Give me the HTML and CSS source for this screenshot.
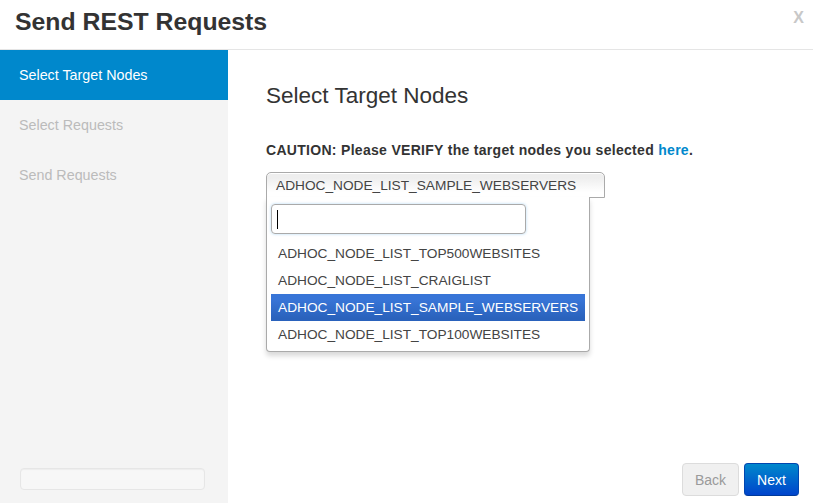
FILE: index.html
```html
<!DOCTYPE html>
<html>
<head>
<meta charset="utf-8">
<link rel="stylesheet" href="styles.css">
</head>
<body>
<div class="modal">
  <div class="modal-header">
    <h3 class="title">Send REST Requests</h3>
    <span class="close">X</span>
  </div>
  <div class="modal-body">
    <aside class="sidebar">
      <ul class="steps">
        <li class="step active">Select Target Nodes</li>
        <li class="step">Select Requests</li>
        <li class="step">Send Requests</li>
      </ul>
      <div class="side-well"></div>
    </aside>
    <main class="content">
      <div class="pane">
        <h2 class="pane-title">Select Target Nodes</h2>
        <p class="caution">CAUTION: Please VERIFY the target nodes you selected <a class="link">here</a>.</p>
        <div class="chosen">
          <div class="chosen-single">ADHOC_NODE_LIST_SAMPLE_WEBSERVERS</div>
          <div class="chosen-drop">
            <div class="chosen-search"><div class="search-box"><span class="caret"></span></div></div>
            <ul class="results">
              <li class="result">ADHOC_NODE_LIST_TOP500WEBSITES</li>
              <li class="result">ADHOC_NODE_LIST_CRAIGLIST</li>
              <li class="result highlighted">ADHOC_NODE_LIST_SAMPLE_WEBSERVERS</li>
              <li class="result">ADHOC_NODE_LIST_TOP100WEBSITES</li>
            </ul>
          </div>
        </div>
      </div>
      <div class="footer">
        <button class="btn btn-back">Back</button>
        <button class="btn btn-next">Next</button>
      </div>
    </main>
  </div>
</div>
</body>
</html>
```

FILE: styles.css
```css
* { box-sizing: border-box; }
html, body {
  margin: 0;
  padding: 0;
  background: #fff;
  font-family: "Liberation Sans", Arial, sans-serif;
  color: #333;
}
.modal {
  width: 813px;
  height: 503px;
  display: flex;
  flex-direction: column;
  overflow: hidden;
}
.modal-header {
  height: 50px;
  border-bottom: 1px solid #e5e5e5;
  display: flex;
  justify-content: space-between;
  align-items: flex-start;
  padding: 7px 9px 0 15px;
}
.title {
  margin: 0;
  font-size: 24.8px;
  line-height: 30px;
  font-weight: bold;
  color: #333;
}
.close {
  margin-top: 2px;
  font-size: 16px;
  line-height: 18px;
  font-weight: bold;
  color: #c8c8c8;
}
.modal-body {
  flex: 1;
  display: flex;
  min-height: 0;
}
.sidebar {
  width: 228px;
  background: #f4f4f4;
  display: flex;
  flex-direction: column;
}
.steps {
  list-style: none;
  margin: 0;
  padding: 0;
}
.step {
  height: 50px;
  line-height: 51px;
  padding-left: 19px;
  font-size: 14.3px;
  color: #bbb;
}
.step.active {
  background: #0088cc;
  color: #fff;
}
.side-well {
  margin: auto 23px 13px 20px;
  height: 22px;
  background: #f7f7f7;
  border: 1px solid #e6e6e6;
  border-radius: 4px;
  box-shadow: inset 0 1px 1px rgba(0,0,0,0.04);
}
.content {
  flex: 1;
  display: flex;
  flex-direction: column;
}
.pane {
  flex: 1;
  padding: 33px 0 0 38px;
}
.pane-title {
  margin: 0;
  font-size: 22.5px;
  line-height: 26px;
  font-weight: normal;
  color: #333;
}
.caution {
  margin: 32px 0 0;
  font-size: 14px;
  letter-spacing: 0.3px;
  line-height: 18px;
  font-weight: bold;
  color: #333;
}
.link {
  color: #0088cc;
}
.chosen {
  position: relative;
  margin-top: 13px;
  width: 339px;
  font-size: 13.7px;
}
.chosen-single {
  height: 26px;
  line-height: 25px;
  padding-left: 9px;
  border: 1px solid #aaa;
  border-radius: 5px 5px 0 0;
  background: linear-gradient(#eee 20%, #fff 80%);
  box-shadow: inset 0 1px 0 #fff;
  color: #444;
  white-space: nowrap;
}
.chosen-drop {
  position: absolute;
  top: 100%;
  margin-top: -1px;
  left: 0;
  width: 324px;
  background: #fff;
  border: 1px solid #aaa;
  border-top: 0;
  border-radius: 0 0 4px 4px;
  box-shadow: 0 4px 5px rgba(0,0,0,0.15);
  z-index: 10;
}
.chosen-search {
  padding: 7px 0 0 4px;
}
.search-box {
  width: 255px;
  height: 30px;
  border: 1px solid #aaa;
  border-radius: 4px;
  box-shadow: 0 0 3px rgba(82,168,236,0.45);
  padding: 5px 0 0 5px;
}
.caret {
  display: block;
  width: 1px;
  height: 19px;
  background: #000;
}
.results {
  list-style: none;
  margin: 6px 4px 3px 0;
  padding: 0 0 0 4px;
}
.result {
  height: 27px;
  line-height: 28px;
  padding: 0 7px;
  color: #444;
  white-space: nowrap;
}
.result.highlighted {
  background: linear-gradient(#3875d7 20%, #2a62bc 90%);
  color: #fff;
}
.footer {
  display: flex;
  justify-content: flex-end;
  gap: 5px;
  padding: 0 14px 7px 0;
}
.btn {
  height: 33px;
  padding: 0 12px;
  font-family: "Liberation Sans", Arial, sans-serif;
  font-size: 14px;
  border-radius: 4px;
  cursor: pointer;
}
.btn-back {
  width: 57px;
  background: #f0f0f0;
  border: 1px solid #dcdcdc;
  color: #9a9a9a;
}
.btn-next {
  width: 55px;
  background: linear-gradient(#0088cc, #0044cc);
  border: 1px solid #0046b0;
  border-bottom-color: #003a9a;
  color: #fff;
}
```
